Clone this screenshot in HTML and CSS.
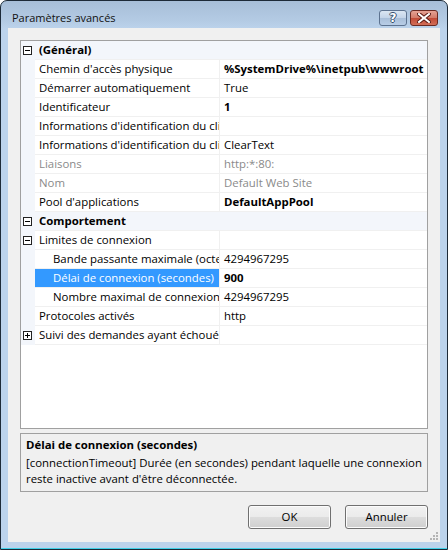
FILE: index.html
```html
<!DOCTYPE html>
<html lang="fr">
<head>
<meta charset="utf-8">
<title>Paramètres avancés</title>
<link rel="stylesheet" href="styles.css">
</head>
<body>
<div class="window">
  <div class="titlebar">
    <span class="title">Paramètres avancés</span>
    <div class="caption-btns">
      <div class="cap help"><span class="q">?</span></div>
      <div class="cap close">
        <svg width="14" height="10" viewBox="0 0 14 10"><path d="M2 1 L12 9 M12 1 L2 9" stroke="#5a1a14" stroke-width="4" stroke-linecap="square"/><path d="M2 1 L12 9 M12 1 L2 9" stroke="#fff" stroke-width="2" stroke-linecap="square"/></svg>
      </div>
    </div>
  </div>
  <div class="client">
    <div class="grid">
      <div class="row cat"><span class="margin"><i class="exp minus"></i></span><span class="name">(Général)</span></div>
      <div class="row"><span class="margin"></span><span class="name">Chemin d'accès physique</span><span class="value b">%SystemDrive%\inetpub\wwwroot</span></div>
      <div class="row"><span class="margin"></span><span class="name">Démarrer automatiquement</span><span class="value">True</span></div>
      <div class="row"><span class="margin"></span><span class="name">Identificateur</span><span class="value b">1</span></div>
      <div class="row"><span class="margin"></span><span class="name"><span class="clip">Informations d'identification du client</span></span><span class="value"></span></div>
      <div class="row"><span class="margin"></span><span class="name"><span class="clip">Informations d'identification du client</span></span><span class="value">ClearText</span></div>
      <div class="row dis"><span class="margin"></span><span class="name">Liaisons</span><span class="value">http:*:80:</span></div>
      <div class="row dis"><span class="margin"></span><span class="name">Nom</span><span class="value">Default Web Site</span></div>
      <div class="row"><span class="margin"></span><span class="name">Pool d'applications</span><span class="value b">DefaultAppPool</span></div>
      <div class="row cat"><span class="margin"><i class="exp minus"></i></span><span class="name">Comportement</span></div>
      <div class="row"><span class="margin"><i class="exp minus"></i></span><span class="name">Limites de connexion</span><span class="value"></span></div>
      <div class="row sub"><span class="margin"></span><span class="name"><span class="clip">Bande passante maximale (octets par seconde)</span></span><span class="value">4294967295</span></div>
      <div class="row sub sel"><span class="margin"></span><span class="name">Délai de connexion (secondes)</span><span class="value b">900</span></div>
      <div class="row sub"><span class="margin"></span><span class="name"><span class="clip">Nombre maximal de connexions simultanées</span></span><span class="value">4294967295</span></div>
      <div class="row"><span class="margin"></span><span class="name">Protocoles activés</span><span class="value">http</span></div>
      <div class="row"><span class="margin"><i class="exp plus"></i></span><span class="name">Suivi des demandes ayant échoué</span><span class="value"></span></div>
    </div>
    <div class="desc">
      <div class="desc-title">Délai de connexion (secondes)</div>
      <div class="desc-text">[connectionTimeout] Durée (en secondes) pendant laquelle une connexion reste inactive avant d'être déconnectée.</div>
    </div>
    <div class="buttons">
      <div class="btn">OK</div>
      <div class="btn">Annuler</div>
    </div>
    <svg class="grip" width="10" height="10" viewBox="0 0 10 10">
      <g fill="#b4b4b4"><rect x="7" y="1" width="2" height="2"/><rect x="4" y="4" width="2" height="2"/><rect x="7" y="4" width="2" height="2"/><rect x="1" y="7" width="2" height="2"/><rect x="4" y="7" width="2" height="2"/><rect x="7" y="7" width="2" height="2"/></g>
    </svg>
  </div>
</div>
</body>
</html>
```
FILE: styles.css
```css
html, body {
  margin: 0;
  padding: 0;
  background: #ffffff;
}
body {
  font-family: "Open Sans", "Noto Sans", sans-serif;
  font-size: 11.4px;
  color: #000;
}
.window {
  width: 448px;
  height: 550px;
  box-sizing: border-box;
  border: 1px solid #1d2a38;
  border-radius: 7px 7px 0 0;
  background: linear-gradient(#a7bed8 0px, #b4cbe4 20px, #bcd3ec 28px, #bcd3ec 100%);
  padding: 0 7px 7px 7px;
  display: flex;
  flex-direction: column;
  box-shadow: inset 0 -1px 0 #3fd0e8;
}
.titlebar {
  height: 27px;
  display: flex;
  align-items: center;
  justify-content: space-between;
}
.title {
  font-size: 11px;
  padding-left: 4px;
  padding-top: 5px;
  color: #111;
}
.caption-btns {
  display: flex;
  gap: 3px;
  margin-top: 6px;
  margin-right: 2px;
}
.cap {
  width: 26px;
  height: 14px;
  border: 1px solid #5d7390;
  border-radius: 3px;
  display: flex;
  align-items: center;
  justify-content: center;
  box-sizing: content-box;
}
.help {
  background: linear-gradient(#dbe6f3 0%, #c3d4e8 50%, #a9bfd9 51%, #b8cde6 100%);
}
.q {
  font-family: "DejaVu Sans", sans-serif;
  font-weight: bold;
  font-size: 12px;
  line-height: 14px;
  color: #fff;
  text-shadow: 1px 0 0 #38506e, -1px 0 0 #38506e, 0 1px 0 #38506e, 0 -1px 0 #38506e;
}
.close {
  border-color: #6b2a22;
  background: linear-gradient(#e5a294 0%, #d37a68 50%, #c24a36 51%, #d16e58 100%);
}
.client {
  flex: 1;
  background: #f0f0f0;
  padding: 12px 12px 0 12px;
  display: flex;
  flex-direction: column;
  position: relative;
}
.grid {
  height: 389px;
  box-sizing: border-box;
  border: 1px solid #a0a0a0;
  background: #fff;
  overflow: hidden;
}
.row {
  display: flex;
  height: 19px;
  line-height: 18px;
}
.margin {
  width: 14px;
  flex: none;
  background: #f3f6fb;
  display: flex;
  align-items: center;
  padding-left: 2px;
  box-sizing: border-box;
}
.name {
  width: 185px;
  flex: none;
  box-sizing: border-box;
  border-right: 1px solid #f0f0f0;
  border-bottom: 1px solid #f0f0f0;
  padding-left: 4px;
  white-space: nowrap;
  overflow: hidden;
}
.clip {
  display: block;
  overflow: hidden;
  white-space: nowrap;
}
.value {
  flex: 1;
  border-bottom: 1px solid #f0f0f0;
  padding-left: 4px;
  white-space: nowrap;
  overflow: hidden;
}
.b {
  font-weight: bold;
}
.cat {
  background: #f3f6fb;
}
.cat .name {
  width: auto;
  flex: 1;
  border-right: none;
  font-weight: bold;
}
.dis .name, .dis .value {
  color: #8a8a8a;
}
.sub .name {
  padding-left: 18px;
}
.sel .name {
  background: #3399ff;
  color: #fff;
}
.exp {
  width: 7px;
  height: 7px;
  border: 1px solid #222;
  background: #fff;
  position: relative;
}
.exp::before {
  content: "";
  position: absolute;
  left: 1px;
  top: 3px;
  width: 5px;
  height: 1px;
  background: #000;
}
.plus::after {
  content: "";
  position: absolute;
  left: 3px;
  top: 1px;
  width: 1px;
  height: 5px;
  background: #000;
}
.desc {
  margin-top: 4px;
  height: 59px;
  box-sizing: border-box;
  border: 1px solid #a0a0a0;
  padding: 3px 5px 0 5px;
  line-height: 16px;
}
.desc-title {
  font-weight: bold;
  margin-bottom: 2px;
}
.buttons {
  display: flex;
  justify-content: flex-end;
  gap: 14px;
  margin-top: 13px;
}
.btn {
  width: 83px;
  height: 24px;
  box-sizing: border-box;
  border: 1px solid #707070;
  border-radius: 3px;
  background: linear-gradient(#f2f2f2 0%, #ebebeb 48%, #dddddd 50%, #cfcfcf 100%);
  box-shadow: inset 0 0 0 1px #fcfcfc;
  text-align: center;
  line-height: 22px;
}
.grip {
  position: absolute;
  right: 1px;
  bottom: 1px;
}
```
